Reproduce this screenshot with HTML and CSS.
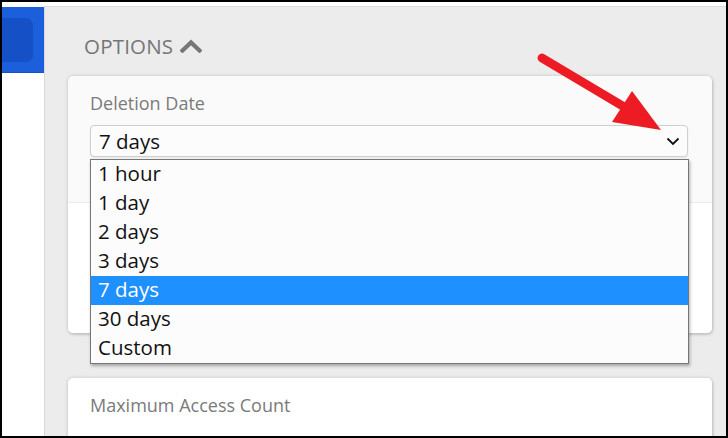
FILE: index.html
```html
<!DOCTYPE html>
<html lang="en">
<head>
<meta charset="utf-8">
<title>Options</title>
<link rel="stylesheet" href="styles.css">
</head>
<body>
<div class="frame">
  <div class="topstrip"></div>
  <div class="main">
    <aside class="sidebar">
      <div class="brand"><div class="brand-inner"></div></div>
    </aside>
    <section class="content">
      <h2 class="options">OPTIONS
        <svg class="chev-up" width="22" height="14" viewBox="0 0 22 14"><path d="M2.5 11.5 L11 3.5 L19.5 11.5" fill="none" stroke="#777" stroke-width="4.2" stroke-linecap="square" stroke-linejoin="miter"/></svg>
      </h2>
      <div class="card card-date">
        <div class="label">Deletion Date</div>
        <div class="select-wrap">
          <div class="select">
            <span>7 days</span>
            <svg class="chev-down" width="14" height="9" viewBox="0 0 14 9"><path d="M1.5 1.5 L7 7 L12.5 1.5" fill="none" stroke="#111" stroke-width="1.8"/></svg>
          </div>
          <ul class="listbox">
            <li>1 hour</li>
            <li>1 day</li>
            <li>2 days</li>
            <li>3 days</li>
            <li class="selected">7 days</li>
            <li>30 days</li>
            <li>Custom</li>
          </ul>
        </div>
        <div class="card-lower"></div>
      </div>
      <div class="card card-count">
        <div class="label">Maximum Access Count</div>
      </div>
    </section>
  </div>
  <svg class="arrow" width="728" height="438" viewBox="0 0 728 438">
    <line x1="542" y1="58" x2="626" y2="108" stroke="#ed1c24" stroke-width="9" stroke-linecap="round"/>
    <polygon points="632,91 612,122 661,130" fill="#ed1c24"/>
  </svg>
</div>
</body>
</html>
```

FILE: styles.css
```css
* { box-sizing: border-box; }
html, body { margin: 0; padding: 0; }
body {
  font-family: "Open Sans", "Noto Sans", sans-serif;
  background: #fff;
}
.frame {
  position: relative;
  width: 728px;
  height: 438px;
  border: 2px solid #000;
  display: flex;
  flex-direction: column;
  overflow: hidden;
  background: #fff;
}
.topstrip { height: 4px; background: #fff; flex: none; }
.main { flex: 1; display: flex; min-height: 0; }
.sidebar { width: 42px; flex: none; background: #fff; }
.brand {
  margin-top: 1px;
  height: 66px;
  background: #1b5fdc;
  border-bottom: 1px solid #1752c4;
  padding-top: 11px;
}
.brand-inner {
  width: 31px;
  height: 44px;
  background: #1650c6;
  border-radius: 0 7px 7px 0;
}
.content {
  flex: 1;
  background: #ececec;
  border-top: 1px solid #dcdcdc;
  border-left: 1px solid #d8d8d8;
  padding: 26px 14px 0 23px;
  min-width: 0;
}
.options {
  margin: 0 0 16px 16px;
  font-size: 20.5px;
  font-weight: 400;
  line-height: 27px;
  color: #757575;
  display: flex;
  align-items: center;
  gap: 7px;
  letter-spacing: 0.2px;
}
.chev-up { margin-top: -2px; }
.card {
  background: #fafafa;
  border-radius: 5px;
  box-shadow: 0 0 3px 1px rgba(0,0,0,0.10), 1px 2px 3px rgba(0,0,0,0.12);
  padding: 15px 24px 0 22px;
}
.card-date {
  height: 257px;
  display: flex;
  flex-direction: column;
  position: relative;
}
.card-count { margin-top: 45px; height: 80px; background: #fff; }
.label {
  font-size: 18px;
  line-height: 24px;
  color: #7a7a7a;
  margin-bottom: 10px;
}
.select-wrap { position: relative; }
.select {
  height: 32px;
  border: 1px solid #cfcfcf;
  border-radius: 4px;
  background: #fcfcfc;
  padding: 0 7px 0 8px;
  font-size: 20.5px;
  line-height: 29px;
  color: #111;
  display: flex;
  align-items: center;
  justify-content: space-between;
  box-shadow: 0 1px 2px rgba(0,0,0,0.08);
}
.chev-down { margin-top: 1px; }
.listbox {
  position: absolute;
  top: calc(100% + 2px);
  left: 0;
  width: 599px;
  margin: 0;
  padding: 0;
  list-style: none;
  background: #fcfcfc;
  border: 1px solid #767676;
  box-shadow: 1px 2px 3px rgba(0,0,0,0.3);
  z-index: 2;
}
.listbox li {
  height: 29px;
  line-height: 27px;
  padding-left: 7px;
  font-size: 20.5px;
  color: #111;
}
.listbox li.selected { background: #1e90ff; color: #fff; }
.card-lower {
  margin: 45px -24px 0 -22px;
  flex: 1;
  border-top: 1px solid #ececec;
  background: #fff;
  border-radius: 0 0 5px 5px;
}
.arrow {
  position: absolute;
  left: -2px;
  top: -2px;
  pointer-events: none;
  z-index: 5;
}
```
